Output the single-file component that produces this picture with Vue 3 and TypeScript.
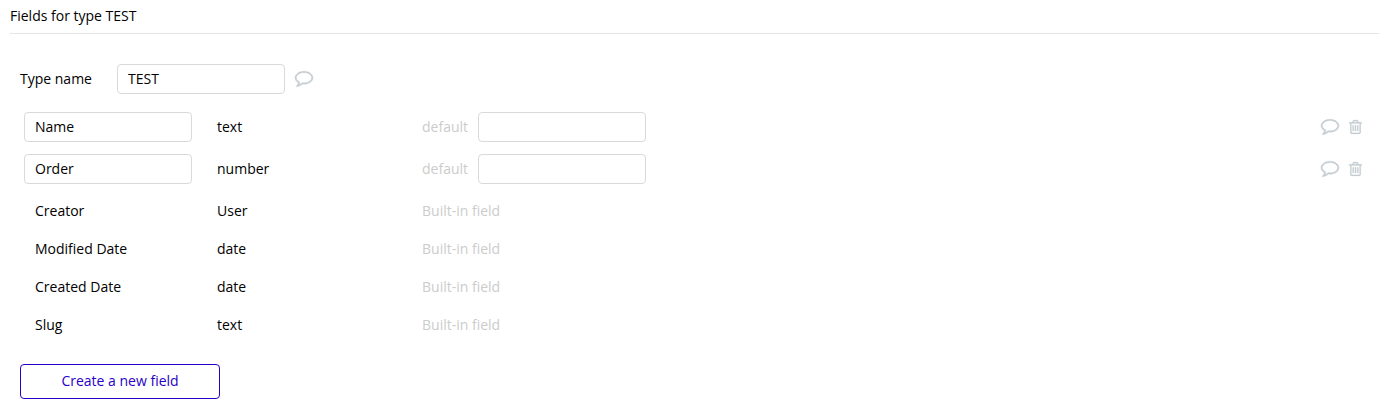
<script setup lang="ts">
import { ref } from 'vue'

interface CustomField {
  id: number
  name: string
  type: string
  defaultValue: string
}

interface BuiltInField {
  name: string
  type: string
}

const typeName = ref('TEST')

const fields = ref<CustomField[]>([
  { id: 1, name: 'Name', type: 'text', defaultValue: '' },
  { id: 2, name: 'Order', type: 'number', defaultValue: '' },
])

const builtInFields: BuiltInField[] = [
  { name: 'Creator', type: 'User' },
  { name: 'Modified Date', type: 'date' },
  { name: 'Created Date', type: 'date' },
  { name: 'Slug', type: 'text' },
]

const commentPath =
  'M896 384q-204 0-381.5 69.5t-282 187.5-104.5 255q0 112 71.5 213.5t201.5 175.5l87 50-27 96q-24 91-70 172 152-63 275-171l43-38 57 6q69 8 130 8 204 0 381.5-69.5t282-187.5 104.5-255-104.5-255-282-187.5-381.5-69.5zm896 512q0 174-120 321.5t-326 233-450 85.5q-70 0-145-8-198 175-460 242-49 14-114 22h-5q-15 0-27-10.5t-16-27.5v-1q-3-4-.5-12t2-10 4.5-9.5l6-9 7-8.5 8-9q7-8 31-34.5t34.5-38 31-39.5 32.5-51 27-59 26-76q-157-89-247.5-220t-90.5-281q0-130 71-248.5t191-204.5 286-136.5 348-50.5 348 50.5 286 136.5 191 204.5 71 248.5z'

const trashPath =
  'M704 736v576q0 14-9 23t-23 9h-64q-14 0-23-9t-9-23v-576q0-14 9-23t23-9h64q14 0 23 9t9 23zm256 0v576q0 14-9 23t-23 9h-64q-14 0-23-9t-9-23v-576q0-14 9-23t23-9h64q14 0 23 9t9 23zm256 0v576q0 14-9 23t-23 9h-64q-14 0-23-9t-9-23v-576q0-14 9-23t23-9h64q14 0 23 9t9 23zm128 724v-948h-896v948q0 22 7 40.5t14.5 27 10.5 8.5h832q3 0 10.5-8.5t14.5-27 7-40.5zm-672-1076h448l-48-117q-7-9-17-11h-317q-10 2-17 11zm928 32v64q0 14-9 23t-23 9h-96v948q0 83-47 143.5t-113 60.5h-832q-66 0-113-58.5t-47-141.5v-952h-96q-14 0-23-9t-9-23v-64q0-14 9-23t23-9h309l70-167q15-37 54-63t79-26h320q40 0 79 26t54 63l70 167h309q14 0 23 9t9 23z'

function removeField(id: number) {
  fields.value = fields.value.filter((field) => field.id !== id)
}

function addField() {
  fields.value.push({ id: Date.now(), name: '', type: 'text', defaultValue: '' })
}
</script>

<template>
  <main class="panel">
    <h1 class="title">Fields for type TEST</h1>

    <div class="type-row">
      <label class="type-label" for="type-name">Type name</label>
      <input id="type-name" v-model="typeName" class="text-box" type="text" />
      <button class="icon-button" type="button" aria-label="Comment on type">
        <svg class="comment-icon" viewBox="0 256 1792 1536" aria-hidden="true">
          <path :d="commentPath" />
        </svg>
      </button>
    </div>

    <table class="fields">
      <colgroup>
        <col class="name-col" />
        <col class="type-col" />
        <col />
        <col class="actions-col" />
      </colgroup>
      <tbody>
        <tr v-for="field in fields" :key="field.id" class="custom">
          <td>
            <input v-model="field.name" class="text-box" type="text" aria-label="Field name" />
          </td>
          <td>{{ field.type }}</td>
          <td>
            <div class="default">
              <label :for="`default-${field.id}`">default</label>
              <input
                :id="`default-${field.id}`"
                v-model="field.defaultValue"
                class="text-box"
                type="text"
              />
            </div>
          </td>
          <td>
            <div class="actions">
              <button class="icon-button" type="button" :aria-label="`Comment on ${field.name}`">
                <svg class="comment-icon" viewBox="0 256 1792 1536" aria-hidden="true">
                  <path :d="commentPath" />
                </svg>
              </button>
              <button
                class="icon-button"
                type="button"
                :aria-label="`Delete ${field.name}`"
                @click="removeField(field.id)"
              >
                <svg class="trash-icon" viewBox="192 128 1408 1536" aria-hidden="true">
                  <path :d="trashPath" />
                </svg>
              </button>
            </div>
          </td>
        </tr>
        <tr v-for="field in builtInFields" :key="field.name" class="built-in">
          <td class="fixed-name">{{ field.name }}</td>
          <td>{{ field.type }}</td>
          <td class="muted" colspan="2">Built-in field</td>
        </tr>
      </tbody>
    </table>

    <button class="create" type="button" @click="addField">Create a new field</button>
  </main>
</template>

<style>
body {
  margin: 0;
  background: #fff;
}
</style>

<style scoped>
.panel {
  box-sizing: border-box;
  padding: 0 0 11px 10px;
  color: #000;
  font: 14px/20px 'Open Sans', 'Noto Sans', sans-serif;
}

.title {
  margin: 0;
  padding: 6px 0 7px;
  border-bottom: 1px solid #e5e5e5;
  font: inherit;
}

.type-row {
  display: flex;
  align-items: center;
  margin: 30px 0 0 10px;
  line-height: 30px;
}

.type-label {
  width: 97px;
}

.text-box {
  box-sizing: border-box;
  display: block;
  width: 168px;
  height: 30px;
  margin: 0;
  padding: 0 10px;
  border: 1px solid #d9d9d9;
  border-radius: 4px;
  background: #fff;
  color: inherit;
  font: inherit;
}

.icon-button {
  display: flex;
  margin: 0;
  padding: 0;
  border: 0;
  background: none;
  cursor: pointer;
}

.type-row .icon-button {
  margin-left: 10px;
}

.icon-button svg {
  display: block;
  overflow: visible;
  fill: #c5cdd2;
  stroke: #c5cdd2;
  stroke-width: 50;
}

.icon-button .comment-icon {
  width: 18px;
  height: 16px;
}

.icon-button .trash-icon {
  width: 13px;
  height: 14px;
  stroke-width: 24;
}

.fields {
  width: 100%;
  margin-top: 18px;
  border-collapse: collapse;
  table-layout: fixed;
}

.name-col {
  width: 207px;
}

.type-col {
  width: 205px;
}

.actions-col {
  width: 80px;
}

td {
  padding: 0;
  line-height: 30px;
  vertical-align: top;
}

td:first-child {
  padding-left: 14px;
}

td.fixed-name {
  padding-left: 25px;
}

.custom td {
  padding-bottom: 12px;
}

.built-in td {
  padding-bottom: 8px;
}

.default {
  display: flex;
  gap: 10px;
}

.default label,
.muted {
  color: #ccc;
}

.actions {
  display: flex;
  align-items: center;
  justify-content: flex-end;
  gap: 10px;
  height: 30px;
  padding-right: 17px;
}

.create {
  box-sizing: border-box;
  display: block;
  width: 200px;
  height: 35px;
  margin: 16px 0 0 10px;
  padding: 0 0 2px;
  border: 1px solid #2800c8;
  border-radius: 4px;
  background: #fff;
  color: #2800c8;
  font: inherit;
  cursor: pointer;
}
</style>
